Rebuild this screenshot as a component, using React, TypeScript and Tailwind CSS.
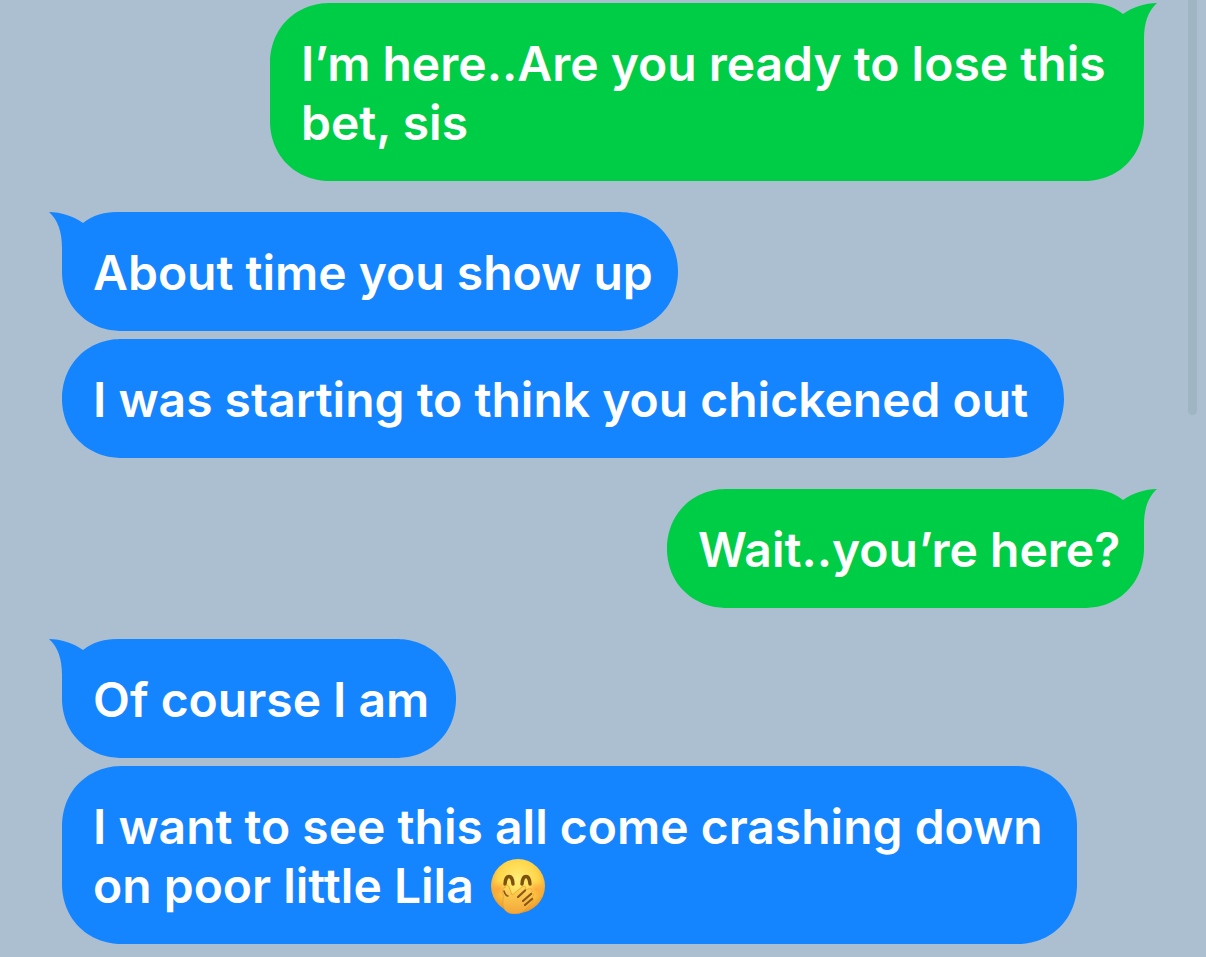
import clsx from "clsx";

type Message = {
  id: number;
  from: "me" | "them";
  text: string;
  tail?: boolean;
  emoji?: boolean;
  width: string;
};

const messages: Message[] = [
  { id: 1, from: "me", text: "I’m here..Are you ready to lose this bet, sis", tail: true, width: "w-[874px]" },
  { id: 2, from: "them", text: "About time you show up", tail: true, width: "w-[616px]" },
  { id: 3, from: "them", text: "I was starting to think you chickened out", width: "w-[1002px]" },
  { id: 4, from: "me", text: "Wait..you’re here?", tail: true, width: "w-[477px]" },
  { id: 5, from: "them", text: "Of course I am", tail: true, width: "w-[394px]" },
  { id: 6, from: "them", text: "I want to see this all come crashing down on poor little Lila", emoji: true, width: "w-[1015px]" },
];

function GiggleEmoji() {
  return (
    <svg
      viewBox="0 0 56 56"
      className="-mt-3 -mb-1 ml-1 inline-block h-14 w-14 align-middle"
      role="img"
      aria-label="Face with hand over mouth"
    >
      <defs>
        <radialGradient id="face" cx="50%" cy="38%" r="62%">
          <stop offset="0" stopColor="#ffef7a" />
          <stop offset="0.6" stopColor="#ffd548" />
          <stop offset="1" stopColor="#ee9428" />
        </radialGradient>
        <radialGradient id="blush">
          <stop offset="0" stopColor="#ff7a35" stopOpacity="0.45" />
          <stop offset="1" stopColor="#ff7a35" stopOpacity="0" />
        </radialGradient>
        <linearGradient id="hand" x1="0" y1="0" x2="0" y2="1">
          <stop offset="0" stopColor="#ffd95a" />
          <stop offset="1" stopColor="#f3a638" />
        </linearGradient>
      </defs>
      <circle cx="28" cy="28" r="27" fill="url(#face)" />
      <ellipse cx="9" cy="31" rx="9" ry="8" fill="url(#blush)" />
      <ellipse cx="46" cy="31" rx="9" ry="8" fill="url(#blush)" />
      <path d="M15 26 C15.500 16 22.500 16 23 26" fill="none" stroke="#7d5210" strokeWidth="3.400" strokeLinecap="round" />
      <path d="M32 26 C32.500 16 39.500 16 40 26" fill="none" stroke="#7d5210" strokeWidth="3.400" strokeLinecap="round" />
      {/* hand */}
      <path
        d="M13 36 C12 32 13 29 15 30 C15 27 18 26 19 29 L22 37 L32 29 C35 27 37 29 35 32 L38 31 C42 30 43 33 41 35 C44 35 44 38 42 40 C44 41 43 44 41 46 L34 53 C29 57 19 57 15 52 C11 47 14 42 13 36 Z"
        fill="url(#hand)"
        stroke="#e39a2c"
        strokeWidth="0.700"
      />
      <path
        d="M35 32.500 L28 39 M41 36 L33 43 M42 41 L35 47"
        fill="none"
        stroke="#8a5518"
        strokeWidth="2.200"
        strokeLinecap="round"
      />
      <path d="M14 33 C15 36 16 38 18 38" fill="none" stroke="#8a5518" strokeWidth="1.600" strokeLinecap="round" />
    </svg>
  );
}

function Tail({ side }: { side: "left" | "right" }) {
  return (
    <svg
      viewBox="0 0 73 60"
      className={clsx(
        "absolute top-0 h-[60px] w-[73px] fill-current",
        side === "left" ? "-left-[13px] text-[#1485ff]" : "-right-[13px] -scale-x-100 text-[#00cd46]"
      )}
      aria-hidden="true"
    >
      <path d="M0 0 C12 0 24 4 34 11 C44 3 54 0 73 0 V60 H13 V36 C13 20 9 8 0 0 Z" />
    </svg>
  );
}

function Bubble({ message }: { message: Message }) {
  const mine = message.from === "me";
  return (
    <div
      className={clsx(
        "relative max-w-full rounded-[60px] pt-[31px] pr-5 pb-[29px] pl-[31px] [corner-shape:superellipse(1.05)]",
        message.width,
        mine ? "bg-[#00cd46]" : "bg-[#1485ff]"
      )}
    >
      {message.tail && <Tail side={mine ? "right" : "left"} />}
      <p className="relative">
        {message.text}
        {message.emoji && <> <GiggleEmoji /></>}
      </p>
    </div>
  );
}

export default function App() {
  return (
    <main className="relative min-h-screen overflow-hidden bg-[#abbfd0] px-[62px] pt-[3px] pb-[13px] font-['Inter',sans-serif] text-[48px] leading-[59px] font-semibold text-white">
      <div className="flex flex-col">
        {messages.map((message, i) => {
          const grouped = i > 0 && messages[i - 1].from === message.from;
          return (
            <div
              key={message.id}
              className={clsx(
                "flex",
                message.from === "me" ? "justify-end" : "justify-start",
                i > 0 && (grouped ? "mt-2" : "mt-[31px]")
              )}
            >
              <Bubble message={message} />
            </div>
          );
        })}
      </div>

      {/* Scroll indicator */}
      <div className="absolute top-0 right-[9px] h-[415px] w-[9px] rounded-b-full bg-[#a0b5c4]" />
    </main>
  );
}
